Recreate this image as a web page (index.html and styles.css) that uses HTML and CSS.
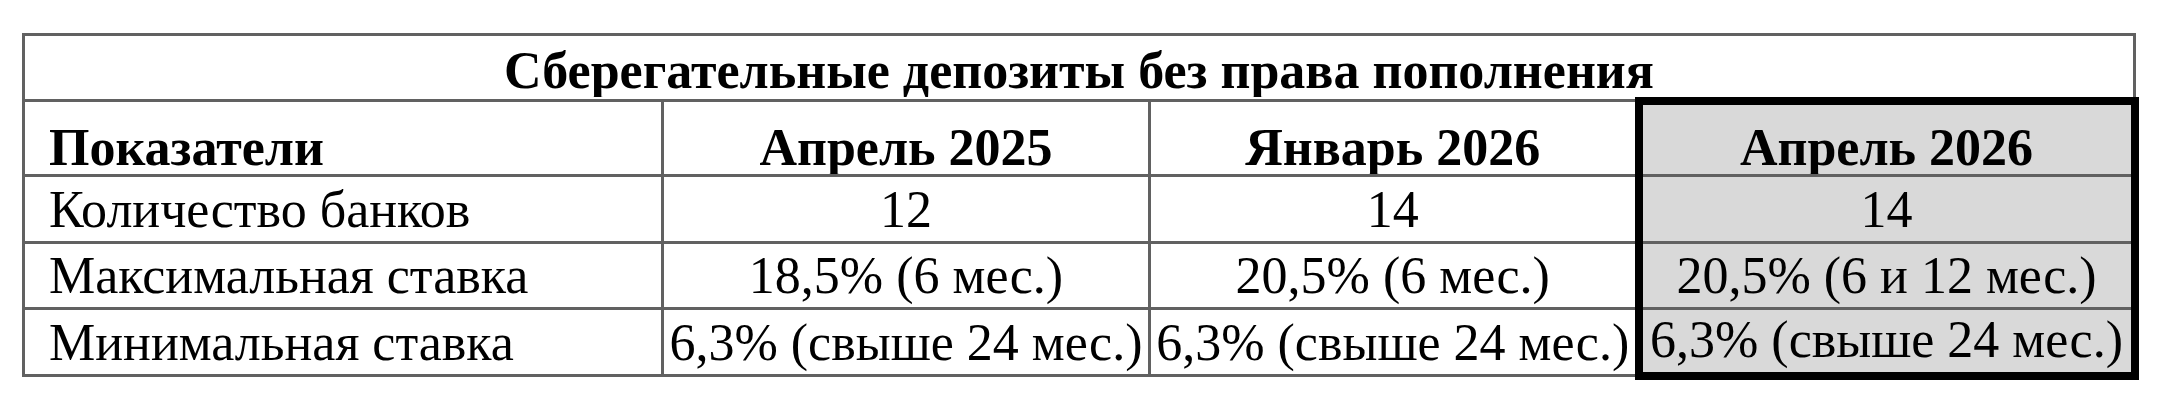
FILE: index.html
```html
<!DOCTYPE html>
<html lang="ru">
<head>
<meta charset="utf-8">
<title>Сберегательные депозиты без права пополнения</title>
<link rel="stylesheet" href="styles.css">
</head>
<body>
<div class="page">
  <table class="deposits">
    <colgroup>
      <col class="c1"><col class="c2"><col class="c3"><col class="c4">
    </colgroup>
    <tr class="r-title">
      <th colspan="4" class="title">Сберегательные депозиты без права пополнения</th>
    </tr>
    <tr class="r-head">
      <th class="lbl">Показатели</th>
      <th>Апрель 2025</th>
      <th>Январь 2026</th>
      <th class="hl hl-top">Апрель 2026</th>
    </tr>
    <tr class="r1">
      <td class="lbl">Количество банков</td>
      <td>12</td>
      <td>14</td>
      <td class="hl">14</td>
    </tr>
    <tr class="r2">
      <td class="lbl">Максимальная ставка</td>
      <td>18,5% (6 мес.)</td>
      <td>20,5% (6 мес.)</td>
      <td class="hl">20,5% (6 и 12 мес.)</td>
    </tr>
    <tr class="r3">
      <td class="lbl">Минимальная ставка</td>
      <td>6,3% (свыше 24 мес.)</td>
      <td>6,3% (свыше 24 мес.)</td>
      <td class="hl hl-bottom">6,3% (свыше 24 мес.)</td>
    </tr>
  </table>
</div>
</body>
</html>
```
FILE: styles.css
```css
html, body {
  margin: 0;
  padding: 0;
  background: #ffffff;
}
body {
  width: 2160px;
  height: 410px;
  overflow: hidden;
  font-family: "Liberation Serif", "Times New Roman", serif;
  color: #000;
}
.page {
  padding: 33px 0 0 22px;
}
.deposits {
  border-collapse: collapse;
  table-layout: fixed;
  width: 2111px;
  font-size: 52px;
}
.c1 { width: 639px; }
.c2 { width: 487px; }
.c3 { width: 489px; }
.c4 { width: 496px; }
.deposits th,
.deposits td {
  border: 3px solid #616161;
  padding: 0 2px 3px 2px;
  text-align: center;
  vertical-align: bottom;
  white-space: nowrap;
  line-height: 1.1;
  overflow: hidden;
}
.deposits th {
  font-weight: bold;
  line-height: 1;
}
.deposits .lbl {
  text-align: left;
  padding-left: 24px;
}
.deposits .title { padding-bottom: 0; }
.r-title { height: 66px; }
.r-head { height: 75px; }
.r-head th { padding-bottom: 0; }
.r1 { height: 67px; }
.r2 { height: 66px; }
.r3 { height: 67px; }
.deposits .hl {
  background: #d9d9d9;
  border-left: 8px solid #000;
  border-right: 8px solid #000;
}
.deposits .hl-top { border-top: 8px solid #000; }
.deposits .hl-bottom { border-bottom: 8px solid #000; }
```
